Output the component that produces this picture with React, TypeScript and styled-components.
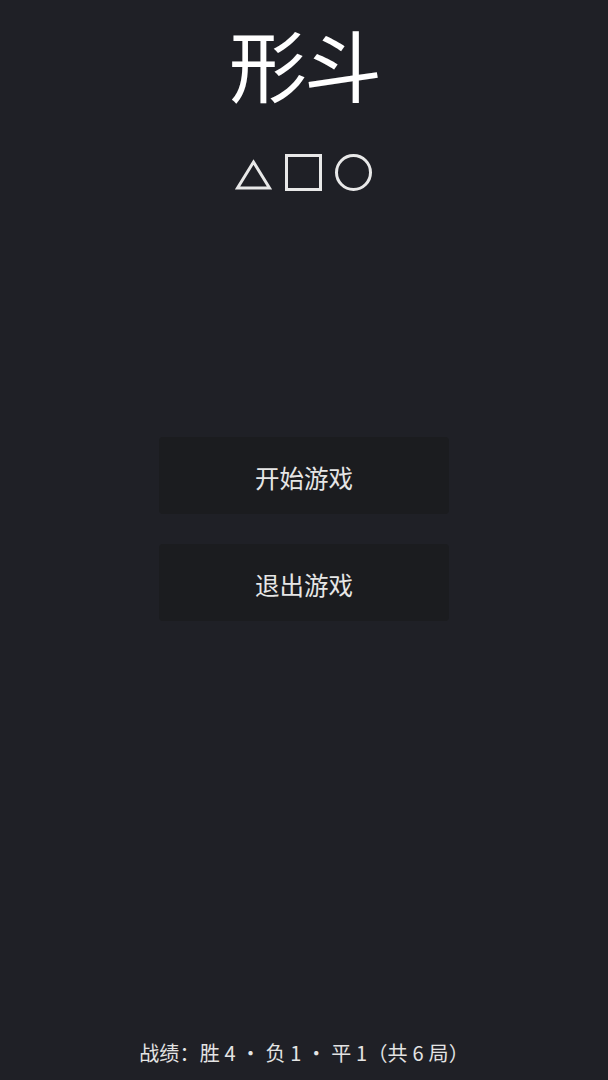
import styled, { createGlobalStyle } from "styled-components";

const GlobalStyle = createGlobalStyle`
  html, body {
    margin: 0;
    padding: 0;
    background: #1f2026;
  }
  body {
    font-family: "Noto Sans CJK SC", "Noto Sans", sans-serif;
    color: #ffffff;
  }
`;

const Screen = styled.div`
  width: 608px;
  height: 1080px;
  display: flex;
  flex-direction: column;
  align-items: center;
  background: #1f2026;
  box-sizing: border-box;
`;

const Title = styled.h1`
  margin: 13px 0 0;
  font-size: 78px;
  font-weight: 400;
  line-height: 100px;
  letter-spacing: -3px;
  color: #ffffff;
`;

const Shapes = styled.div`
  display: flex;
  gap: 13px;
  align-items: flex-end;
  margin-top: 41px;
  margin-right: 2px;
`;

const Menu = styled.div`
  display: flex;
  flex-direction: column;
  gap: 30px;
  margin-top: 246px;
`;

const MenuButton = styled.button`
  width: 290px;
  height: 77px;
  padding: 4px 0 0;
  border: none;
  border-radius: 4px;
  background: #1b1c1f;
  color: #e6e6e6;
  font-family: "Noto Sans CJK SC", sans-serif;
  font-size: 24.5px;
  cursor: pointer;
`;

const Spacer = styled.div`
  flex: 1;
`;

const Record = styled.div`
  margin-bottom: 13px;
  font-size: 20px;
  letter-spacing: 0.2px;
  color: #e4e4e4;
  line-height: 28px;
`;

export default function App() {
  return (
    <Screen>
      <GlobalStyle />
      <Title>形斗</Title>
      <Shapes>
        <svg width="37" height="32" viewBox="0 0 37 32">
          <polygon points="18.5,3 34.5,29 2.5,29" fill="none" stroke="#e8e8e8" strokeWidth="3" />
        </svg>
        <svg width="37" height="37" viewBox="0 0 37 37">
          <rect x="1.5" y="1.5" width="34" height="34" fill="none" stroke="#e8e8e8" strokeWidth="3" />
        </svg>
        <svg width="37" height="37" viewBox="0 0 37 37">
          <circle cx="18.5" cy="18.5" r="17" fill="none" stroke="#e8e8e8" strokeWidth="3" />
        </svg>
      </Shapes>
      <Menu>
        <MenuButton>开始游戏</MenuButton>
        <MenuButton>退出游戏</MenuButton>
      </Menu>
      <Spacer />
      <Record>战绩：胜 4 · 负 1 · 平 1（共 6 局）</Record>
    </Screen>
  );
}
